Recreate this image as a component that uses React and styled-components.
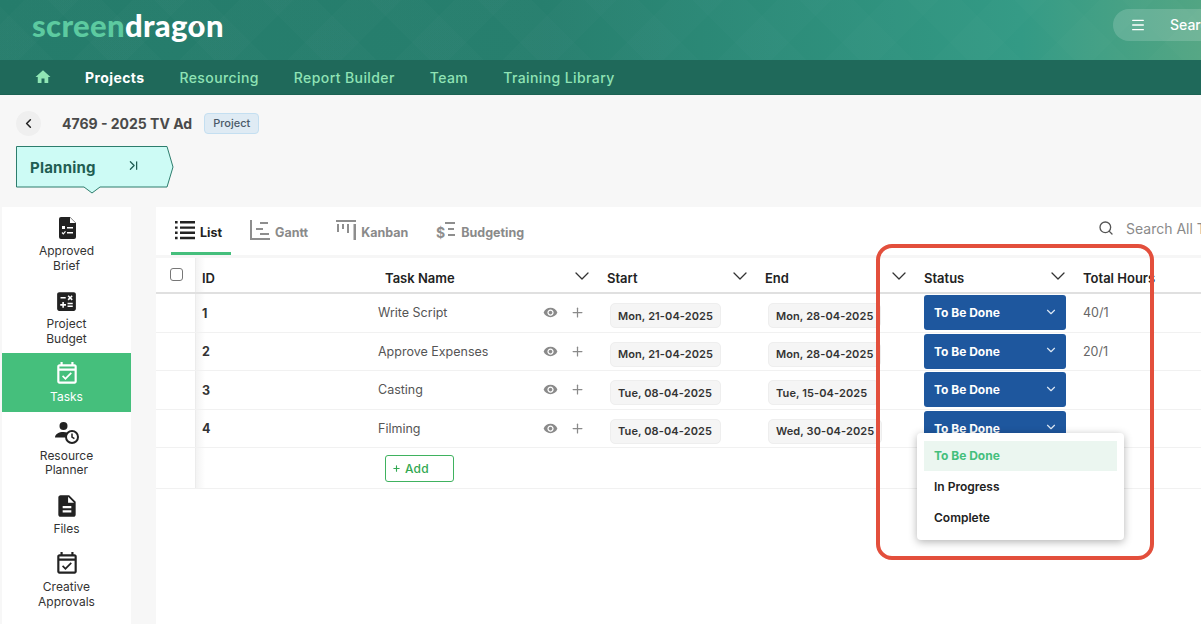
import React from 'react';
import styled, { createGlobalStyle } from 'styled-components';
import { ChevronDown, ChevronLast, ChevronLeft, Menu, Plus, Search } from 'lucide-react';
import { MdCalculate, MdDescription, MdHome, MdOutlineEventAvailable, MdVisibility } from 'react-icons/md';

const GlobalStyle = createGlobalStyle`
  html, body {
    margin: 0;
    padding: 0;
    background: #f7f7f7;
    font-family: Inter, "Liberation Sans", sans-serif;
  }
  * { box-sizing: border-box; }
`;

const Page = styled.div`
  position: relative;
  width: 1201px;
  height: 624px;
  overflow: hidden;
  background: #f7f7f7;
`;

const TopBar = styled.header`
  height: 60px;
  display: flex;
  align-items: center;
  justify-content: space-between;
  padding-left: 32px;
  background:
    repeating-linear-gradient(45deg, rgba(255,255,255,0.012) 0 38px, rgba(255,255,255,0) 38px 76px),
    repeating-linear-gradient(-45deg, rgba(255,255,255,0.012) 0 38px, rgba(255,255,255,0) 38px 76px),
    linear-gradient(90deg, #257c6b 0%, #277f6e 45%, #339a85 85%, #52a583 100%);
`;

const Logo = styled.div`
  font-family: Lato, sans-serif;
  font-size: 31px;
  font-weight: 900;
  letter-spacing: 0.35px;
  color: #fff;
  margin-top: -11px;
`;

const LogoLight = styled.span`
  color: #5ccaa0;
  font-weight: 900;
`;

const EyeLetter = styled.span`
  position: relative;
  &::after {
    content: '';
    position: absolute;
    left: 7px;
    top: 17px;
    width: 4px;
    height: 4px;
    border-radius: 50%;
    background: #5d6a5f;
  }
`;

const SearchPill = styled.div`
  display: flex;
  align-items: center;
  width: 88px;
  height: 32px;
  flex: none;
  margin-top: -11px;
  padding-left: 17px;
  gap: 24px;
  border-radius: 16px 0 0 16px;
  background: rgba(255,255,255,0.16);
  color: #fff;
  font-size: 14px;
  font-weight: 500;
  white-space: nowrap;
  overflow: hidden;
`;

const PillIcon = styled(Menu)`
  flex: none;
`;

const NavBar = styled.nav`
  height: 35px;
  display: flex;
  align-items: center;
  gap: 35px;
  padding-left: 34px;
  background: #1f695a;
  border-bottom: 1px solid #1b6253;
`;

const NavLink = styled.a`
  font-size: 14px;
  letter-spacing: 0.4px;
  font-weight: ${p => (p.$active ? 700 : 500)};
  color: ${p => (p.$active ? '#fff' : '#8fe3b5')};
`;

const HomeLink = styled.a`
  display: flex;
  color: #8fe6b4;
  margin-right: -2px;
`;

const TitleRow = styled.div`
  display: flex;
  align-items: center;
  height: 51px;
  padding: 5px 0 0 16px;
`;

const BackButton = styled.div`
  width: 25px;
  height: 25px;
  border-radius: 50%;
  background: #efefef;
  display: flex;
  align-items: center;
  justify-content: center;
  color: #222;
  margin-right: 21px;
`;

const ProjectTitle = styled.div`
  font-size: 14px;
  font-weight: 700;
  color: #4a4a4a;
  margin-right: 12px;
`;

const Badge = styled.div`
  height: 21px;
  padding: 0 8px;
  display: flex;
  align-items: center;
  border-radius: 4px;
  border: 1px solid #c4dff1;
  background: #dfebf4;
  color: #4b5a68;
  font-size: 11px;
  font-weight: 500;
`;

const StageRow = styled.div`
  height: 61px;
  padding-left: 16px;
`;

const Stage = styled.div`
  position: relative;
  width: 158px;
  height: 48px;
  display: flex;
  padding: 12px 0 0 14px;
  gap: 30px;
  color: #1f5d52;
  font-size: 15px;
  font-weight: 700;
  letter-spacing: 0.2px;
`;

const StageShape = styled.svg`
  position: absolute;
  left: 0;
  top: 0;
`;

const StageLabel = styled.span`
  position: relative;
  line-height: 19px;
`;

const StageIcon = styled(ChevronLast)`
  position: relative;
`;

const Body = styled.div`
  display: flex;
  height: 417px;
`;

const Sidebar = styled.aside`
  width: 129px;
  margin-left: 2px;
  background: #fff;
`;

const SideItem = styled.div`
  display: flex;
  flex-direction: column;
  align-items: center;
  gap: 4px;
  padding: 9px 6px 7px;
  background: ${p => (p.$active ? '#45bf7c' : 'transparent')};
  color: ${p => (p.$active ? '#fff' : '#222')};
`;

const SideIcon = styled.div`
  height: 24px;
  display: flex;
  align-items: center;
  justify-content: center;
`;

const SideLabel = styled.div`
  font-size: 12px;
  line-height: 14.5px;
  text-align: center;
  color: ${p => (p.$active ? '#fff' : '#333')};
  white-space: pre-line;
`;

const Main = styled.main`
  flex: 1;
  margin-left: 25px;
  background: #fff;
`;

const TabBar = styled.div`
  height: 51px;
  display: flex;
  align-items: flex-start;
  gap: 15px;
  padding-left: 15px;
  border-bottom: 3px solid #f6f6f6;
`;

const Tab = styled.div`
  display: flex;
  align-items: center;
  gap: 5px;
  padding: 0 9px 0 4px;
  height: 48px;
  font-size: 12.5px;
  font-weight: 700;
  color: ${p => (p.$active ? '#222' : '#8a8a8a')};
  border-bottom: 3px solid ${p => (p.$active ? '#45bf7c' : 'transparent')};
`;

const TabLabel = styled.span`
  margin-top: 5px;
`;

const TabSearch = styled.div`
  margin-left: auto;
  display: flex;
  align-items: flex-start;
  width: 103px;
  padding-top: 13px;
  gap: 12px;
  flex: none;
  font-size: 14px;
  color: #8a8a8a;
  white-space: nowrap;
  overflow: hidden;
`;

const TabSearchIcon = styled(Search)`
  flex: none;
  color: #555;
`;

const Row = styled.div`
  display: grid;
  grid-template-columns: 39px 183px 222px 158px 159px 159px 1fr;
  height: ${p => p.$height || '38.5px'};
  border-bottom: ${p => (p.$head ? '2px solid #e0e0e0' : '1px solid #f1f1f1')};
`;

const Cell = styled.div`
  position: relative;
  display: flex;
  align-items: center;
  min-width: 0;
  font-size: 12.5px;
  color: #555;
`;

const CheckCell = styled(Cell)`
  padding-left: 14px;
  align-items: flex-start;
  padding-top: 10px;
`;

const Checkbox = styled.div`
  width: 13px;
  height: 13px;
  border: 1px solid #777;
  border-radius: 3px;
  background: #fff;
`;

const IdCell = styled(Cell)`
  padding-left: 6px;
  padding-top: ${p => (p.$head ? '5px' : '1px')};
  border-left: 1px solid #ececec;
  background: linear-gradient(90deg, #f3f3f3, #fff 9px);
  font-size: ${p => (p.$head ? '13px' : '12.5px')};
  font-weight: ${p => (p.$head ? 600 : 700)};
  color: ${p => (p.$head ? '#222' : '#333')};
`;

const HeadCell = styled(Cell)`
  justify-content: space-between;
  padding: 5px 6px 0 7px;
  font-size: 13px;
  font-weight: 600;
  color: #222;
  white-space: nowrap;
`;

const HeadChevron = styled(ChevronDown)`
  color: #333;
  margin-top: -4px;
`;

const TaskName = styled.div`
  flex: 1;
`;

const RowIcons = styled.div`
  display: flex;
  align-items: center;
  gap: 12px;
  color: #8a8a8a;
  margin-right: 15px;
`;

const DateChip = styled.div`
  margin: 6px 0 0 10px;
  height: 25px;
  min-width: 111px;
  padding: 0 7px;
  display: flex;
  align-items: center;
  white-space: nowrap;
  background: #f5f5f5;
  border: 1px solid #eeeeee;
  border-radius: 5px;
  font-size: 11px;
  font-weight: 600;
  letter-spacing: 0.1px;
  color: #333;
`;

const StatusButton = styled.div`
  margin-left: 7px;
  width: 142px;
  height: 35px;
  display: flex;
  align-items: center;
  justify-content: space-between;
  padding: 0 8px 0 10px;
  border-radius: 3px;
  background: #1e579e;
  color: #fff;
  font-size: 12px;
  font-weight: 700;
`;

const StatusChevron = styled(ChevronDown)`
  margin-top: -2px;
  color: #dce7f3;
`;

const HoursCell = styled(Cell)`
  padding-left: 7px;
  font-size: 12.5px;
  color: #666;
`;

const AddButton = styled.div`
  margin: 0 0 0 7px;
  width: 69px;
  height: 27px;
  display: flex;
  align-items: center;
  padding-left: 6px;
  gap: 4px;
  border: 1px solid #3fb25f;
  border-radius: 3px;
  color: #32a852;
  font-size: 12px;
  font-weight: 500;
  letter-spacing: 0.2px;
`;

const StatusMenu = styled.div`
  position: absolute;
  left: 0;
  top: 23.5px;
  z-index: 3;
  width: 207px;
  height: 107px;
  padding: 8px 7px;
  background: #fff;
  border-radius: 4px;
  box-shadow: 0 2px 8px rgba(0,0,0,0.3);
`;

const MenuItem = styled.div`
  height: ${p => (p.$selected ? '30px' : '31px')};
  display: flex;
  align-items: center;
  padding-left: 10px;
  padding-bottom: ${p => (p.$selected ? '1px' : '0')};
  font-size: 12px;
  font-weight: ${p => (p.$selected ? 700 : 600)};
  color: ${p => (p.$selected ? '#45bf7c' : '#222')};
  background: ${p => (p.$selected ? '#ebf6f0' : 'transparent')};
`;

// annotation drawn on top of the screenshot
const Callout = styled.div`
  position: absolute;
  left: 876px;
  top: 244px;
  width: 278px;
  height: 316px;
  z-index: 5;
  border: 4px solid #e34f3c;
  border-radius: 16px;
  pointer-events: none;
`;

const BriefIcon = () => (
  <svg width="24" height="24" viewBox="0 0 24 24">
    <path d="M6 1h9l6 6v14a2 2 0 0 1-2 2H6a2 2 0 0 1-2-2V3a2 2 0 0 1 2-2z" fill="#222" />
    <path d="M15 1.5V7h5.5z" fill="#fff" />
    <path d="M7 10h3v3H7zM12 11h6v1.4h-6zM12 16h6v1.4h-6z" fill="#fff" />
    <path d="M7 16.5l1.3 1.3L10.5 15.4" fill="none" stroke="#fff" strokeWidth="1.2" />
  </svg>
);

const PlannerIcon = () => (
  <svg width="24" height="24" viewBox="0 0 24 24">
    <circle cx="8.5" cy="5" r="4" fill="#222" />
    <path d="M0 16.5c0-3.5 4-5.5 8.5-5.5 1.500 0 3 .2 4.200.7A7.500 7.500 0 0 0 10.600 16.500z" fill="#222" />
    <circle cx="17" cy="16" r="6" fill="#fff" stroke="#222" strokeWidth="2" />
    <path d="M17 12.500V16l2.400 1.600" fill="none" stroke="#222" strokeWidth="1.500" />
  </svg>
);

const ListIcon = () => (
  <svg width="20" height="20" viewBox="0 0 20 20" fill="#222">
    <path d="M0 1h2.600v2.400H0zM5 1h15v2.400H5zM0 6.400h2.600v2.400H0zM5 6.400h15v2.400H5zM0 11.600h2.600V14H0zM5 11.600h15V14H5zM0 16.800h2.600v2.400H0zM5 16.800h15v2.400H5z" />
  </svg>
);

const GanttIcon = () => (
  <svg width="20" height="20" viewBox="0 0 20 20" fill="#8e8e8e">
    <path d="M0 0h2v20H0zM0 18h20v2H0zM10 2h8v2h-8zM6 8h7v2H6zM10 13h9v2h-9z" />
  </svg>
);

const KanbanIcon = () => (
  <svg width="20" height="20" viewBox="0 0 20 20" fill="#8e8e8e">
    <path d="M0 0h20v2H0zM1 4h2v8H1zM6 4h2v5H6zM11 4h2v9h-2zM17.500 4H20v16h-2.500z" />
  </svg>
);

const BudgetIcon = () => (
  <svg width="20" height="20" viewBox="0 0 20 20" fill="#8e8e8e">
    <path d="M9 2h10v2H9zM12 8h6v2h-6zM12 14h7v2h-7z" />
    <text x="0" y="18" fontSize="14" fontFamily="Inter, sans-serif">$</text>
  </svg>
);

const navItems = ['Projects', 'Resourcing', 'Report Builder', 'Team', 'Training Library'];

const sideItems = [
  { label: 'Approved\nBrief', icon: <BriefIcon /> },
  { label: 'Project\nBudget', icon: <MdCalculate size={25} /> },
  { label: 'Tasks', icon: <MdOutlineEventAvailable size={26} />, active: true },
  { label: 'Resource\nPlanner', icon: <PlannerIcon /> },
  { label: 'Files', icon: <MdDescription size={26} /> },
  { label: 'Creative\nApprovals', icon: <MdOutlineEventAvailable size={26} /> },
];

const tasks = [
  { id: 1, name: 'Write Script', start: 'Mon, 21-04-2025', end: 'Mon, 28-04-2025', hours: '40/1' },
  { id: 2, name: 'Approve Expenses', start: 'Mon, 21-04-2025', end: 'Mon, 28-04-2025', hours: '20/1' },
  { id: 3, name: 'Casting', start: 'Tue, 08-04-2025', end: 'Tue, 15-04-2025', hours: '' },
  { id: 4, name: 'Filming', start: 'Tue, 08-04-2025', end: 'Wed, 30-04-2025', hours: '', open: true },
];

const headChevron = <HeadChevron size={24} strokeWidth={1.3} />;

const App = () => (
  <Page>
    <GlobalStyle />
    <TopBar>
      <Logo>
        <LogoLight>screen</LogoLight>drag<EyeLetter>o</EyeLetter>n
      </Logo>
      <SearchPill>
        <PillIcon size={16} />
        Search
      </SearchPill>
    </TopBar>
    <NavBar>
      <HomeLink><MdHome size={18} /></HomeLink>
      {navItems.map((item, i) => (
        <NavLink key={item} $active={i === 0}>{item}</NavLink>
      ))}
    </NavBar>

    <TitleRow>
      <BackButton><ChevronLeft size={15} strokeWidth={2.5} /></BackButton>
      <ProjectTitle>4769 - 2025 TV Ad</ProjectTitle>
      <Badge>Project</Badge>
    </TitleRow>
    <StageRow>
      <Stage>
        <StageShape width="158" height="48" viewBox="0 0 158 48">
          <path d="M0.500 0.500H151L157 21L151 41H84L76 47L68 41H0.500z" fill="#cdfbf5" stroke="#2d7d6d" />
        </StageShape>
        <StageLabel>Planning</StageLabel>
        <StageIcon size={15} />
      </Stage>
    </StageRow>

    <Body>
      <Sidebar>
        {sideItems.map(item => (
          <SideItem key={item.label} $active={item.active}>
            <SideIcon>{item.icon}</SideIcon>
            <SideLabel $active={item.active}>{item.label}</SideLabel>
          </SideItem>
        ))}
      </Sidebar>
      <Main>
        <TabBar>
          <Tab $active><ListIcon /><TabLabel>List</TabLabel></Tab>
          <Tab><GanttIcon /><TabLabel>Gantt</TabLabel></Tab>
          <Tab><KanbanIcon /><TabLabel>Kanban</TabLabel></Tab>
          <Tab><BudgetIcon /><TabLabel>Budgeting</TabLabel></Tab>
          <TabSearch><TabSearchIcon size={16} />Search All Tasks</TabSearch>
        </TabBar>

        <Row $head $height="36px">
          <CheckCell><Checkbox /></CheckCell>
          <IdCell $head>ID</IdCell>
          <HeadCell>Task Name{headChevron}</HeadCell>
          <HeadCell>Start{headChevron}</HeadCell>
          <HeadCell>End{headChevron}</HeadCell>
          <HeadCell>Status{headChevron}</HeadCell>
          <HeadCell>Total Hours</HeadCell>
        </Row>

        {tasks.map(task => (
          <Row key={task.id}>
            <Cell />
            <IdCell>{task.id}</IdCell>
            <Cell>
              <TaskName>{task.name}</TaskName>
              <RowIcons>
                <MdVisibility size={15} />
                <Plus size={15} />
              </RowIcons>
            </Cell>
            <Cell><DateChip>{task.start}</DateChip></Cell>
            <Cell><DateChip>{task.end}</DateChip></Cell>
            <Cell>
              <StatusButton>To Be Done<StatusChevron size={14} /></StatusButton>
              {task.open && (
                <StatusMenu>
                  <MenuItem $selected>To Be Done</MenuItem>
                  <MenuItem>In Progress</MenuItem>
                  <MenuItem>Complete</MenuItem>
                </StatusMenu>
              )}
            </Cell>
            <HoursCell>{task.hours}</HoursCell>
          </Row>
        ))}

        <Row $height="41px">
          <Cell />
          <IdCell />
          <Cell><AddButton><Plus size={9} strokeWidth={3} />Add</AddButton></Cell>
        </Row>
      </Main>
    </Body>
    <Callout />
  </Page>
);

export default App;
